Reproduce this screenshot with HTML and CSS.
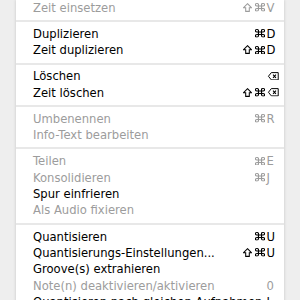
FILE: index.html
```html
<!DOCTYPE html>
<html lang="de">
<head>
  <meta charset="utf-8" />
  <title>Kontextmenü</title>
  <link rel="stylesheet" href="styles.css">
</head>
<body>
  <svg class="defs" width="0" height="0">
    <symbol id="cmd" viewBox="2.2 2.2 19.6 19.6" preserveAspectRatio="none">
      <path d="M15 6v12a3 3 0 1 0 3-3H6a3 3 0 1 0 3 3V6a3 3 0 1 0-3 3h12a3 3 0 1 0-3-3z" fill="none" stroke="currentColor" stroke-width="2.3" stroke-linejoin="round"/>
    </symbol>
    <symbol id="shift" viewBox="0 0 10 10">
      <path d="M5 0.8L9.3 5.2H7V9.3H3V5.2H0.7Z" fill="none" stroke="currentColor" stroke-width="1.15" stroke-linejoin="miter"/>
    </symbol>
    <symbol id="del" viewBox="0 0 13 10">
      <path d="M4.2 0.7H12.3V9.3H4.2L0.8 5Z" fill="none" stroke="currentColor" stroke-width="1.15"/>
      <path d="M6.2 3L9.6 7M9.6 3L6.2 7" fill="none" stroke="currentColor" stroke-width="1.25"/>
    </symbol>
  </svg>

  <div class="menu">
    <div class="item off"><span class="label">Zeit einsetzen</span><span class="mods"><svg class="ic shift"><use href="#shift"/></svg><svg class="ic cmd"><use href="#cmd"/></svg></span><span class="key">V</span></div>
    <div class="sep"></div>
    <div class="item"><span class="label">Duplizieren</span><span class="mods"><svg class="ic cmd"><use href="#cmd"/></svg></span><span class="key">D</span></div>
    <div class="item"><span class="label">Zeit duplizieren</span><span class="mods"><svg class="ic shift"><use href="#shift"/></svg><svg class="ic cmd"><use href="#cmd"/></svg></span><span class="key">D</span></div>
    <div class="sep"></div>
    <div class="item"><span class="label">Löschen</span><span class="mods"></span><span class="key"><svg class="ic del"><use href="#del"/></svg></span></div>
    <div class="item"><span class="label">Zeit löschen</span><span class="mods"><svg class="ic shift"><use href="#shift"/></svg><svg class="ic cmd"><use href="#cmd"/></svg></span><span class="key"><svg class="ic del"><use href="#del"/></svg></span></div>
    <div class="sep"></div>
    <div class="item off"><span class="label">Umbenennen</span><span class="mods"><svg class="ic cmd"><use href="#cmd"/></svg></span><span class="key">R</span></div>
    <div class="item off"><span class="label">Info-Text bearbeiten</span></div>
    <div class="sep"></div>
    <div class="item off"><span class="label">Teilen</span><span class="mods"><svg class="ic cmd"><use href="#cmd"/></svg></span><span class="key">E</span></div>
    <div class="item off"><span class="label">Konsolidieren</span><span class="mods"><svg class="ic cmd"><use href="#cmd"/></svg></span><span class="key">J</span></div>
    <div class="item"><span class="label">Spur einfrieren</span></div>
    <div class="item off"><span class="label">Als Audio fixieren</span></div>
    <div class="sep"></div>
    <div class="item"><span class="label">Quantisieren</span><span class="mods"><svg class="ic cmd"><use href="#cmd"/></svg></span><span class="key">U</span></div>
    <div class="item"><span class="label">Quantisierungs-Einstellungen...</span><span class="mods"><svg class="ic shift"><use href="#shift"/></svg><svg class="ic cmd"><use href="#cmd"/></svg></span><span class="key">U</span></div>
    <div class="item"><span class="label">Groove(s) extrahieren</span></div>
    <div class="item off"><span class="label">Note(n) deaktivieren/aktivieren</span><span class="key">0</span></div>
    <div class="item"><span class="label">Quantisieren nach gleichen Aufnahmen</span><span class="key">I</span></div>
  </div>
</body>
</html>
```

FILE: styles.css
```css
body { margin:0; background:#eeeeee; font-family:"DejaVu Sans", sans-serif; font-size:11.6px; overflow:hidden; }
.defs { position:absolute; }

.menu {
  margin:-0.2px 0 0 16px; width:268px;
  background:#fff; box-shadow:0 0 3px rgba(0,0,0,.18);
}
.item {
  display:flex; align-items:baseline;
  height:16.35px; line-height:16.35px;
  padding:0 3.5px 0 17px;
  color:#000; white-space:nowrap;
}
.item.off { color:#9c9c9c; }
.label { flex:1; }
.mods { margin-right:1.5px; }
.key { width:14px; }

.ic { vertical-align:baseline; }
.ic.cmd { width:10px; height:8.5px; }
.ic.shift { width:9px; height:9px; margin-right:3px; }
.ic.del { width:12.6px; height:8.5px; }

.sep { height:2px; background:#e8e8e8; margin:3.9px 0; }
```
